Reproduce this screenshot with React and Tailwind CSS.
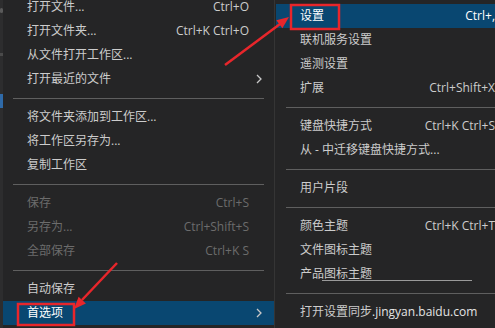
import React from "react";

const leftMenu = [
  { label: "打开文件...", shortcut: "Ctrl+O" },
  { label: "打开文件夹...", shortcut: "Ctrl+K Ctrl+O" },
  { label: "从文件打开工作区..." },
  { label: "打开最近的文件", submenu: true },
  { sep: true },
  { label: "将文件夹添加到工作区..." },
  { label: "将工作区另存为..." },
  { label: "复制工作区" },
  { sep: true },
  { label: "保存", shortcut: "Ctrl+S", disabled: true },
  { label: "另存为...", shortcut: "Ctrl+Shift+S", disabled: true },
  { label: "全部保存", shortcut: "Ctrl+K S", disabled: true },
  { sep: true },
  { label: "自动保存" },
  { label: "首选项", submenu: true, selected: true },
];

const rightMenu = [
  { label: "设置", shortcut: "Ctrl+,", selected: true },
  { label: "联机服务设置" },
  { label: "遥测设置" },
  { label: "扩展", shortcut: "Ctrl+Shift+X" },
  { sep: true },
  { label: "键盘快捷方式", shortcut: "Ctrl+K Ctrl+S" },
  { label: "从 - 中迁移键盘快捷方式..." },
  { sep: true },
  { label: "用户片段" },
  { sep: true },
  { label: "颜色主题", shortcut: "Ctrl+K Ctrl+T" },
  { label: "文件图标主题" },
  { label: "产品图标主题", underline: true },
  { sep: true },
  { label: "打开设置同步", watermark: true },
];

const Chevron = () => (
  <svg width="6" height="10" viewBox="0 0 6 10" fill="none">
    <polyline points="1,1 5,5 1,9" stroke="#c8c8c8" strokeWidth="1.3" />
  </svg>
);

const MenuRow = ({ item }) => {
  if (item.sep) {
    return (
      <div className="h-[14px] flex items-center px-[10px]">
        <div className="h-px w-full bg-[#5f5f5f]" />
      </div>
    );
  }
  const tone = item.selected
    ? "bg-[#094771] text-white"
    : item.disabled
    ? "text-[#6c6c6c]"
    : "text-[#cccccc]";
  return (
    <div className={`h-6 shrink-0 flex items-center pl-6 pr-[12px] relative ${tone}`}>
      <span className="flex-1 whitespace-nowrap">
        {item.label}
        {item.watermark && (
          <span className="text-[#e4e4e4]">.jingyan.baidu.com</span>
        )}
      </span>
      {item.shortcut && (
        <span className="whitespace-nowrap text-[12px]">{item.shortcut}</span>
      )}
      <span className="w-[13px] flex justify-end">{item.submenu && <Chevron />}</span>
      {item.underline && (
        <div className="absolute left-[46px] top-[18px] w-[150px] h-px bg-[#9a9a9a]" />
      )}
    </div>
  );
};

export default function App() {
  return (
    <div className="w-[495px] h-[328px] overflow-hidden relative flex bg-[#252526] text-[12px] font-['Open_Sans','Noto_Sans_CJK_SC',sans-serif]">
      <div className="w-[3px] shrink-0 bg-[#2d2d2e] flex flex-col items-center">
        <div className="mt-[8px] w-[3px] h-[5px] rounded-full bg-[#5a5a5a]" />
        <div className="mt-[40px] w-[3px] h-[3px] bg-[#4a4a4a]" />
        <div className="mt-[38px] w-[3px] h-[14px] bg-[#2f6aa8]" />
      </div>

      <div className="w-[272px] shrink-0 flex flex-col mt-[-5px] border-r border-[#353535]">
        {leftMenu.map((item, i) => (
          <MenuRow key={i} item={item} />
        ))}
      </div>

      <div className="w-[245px] shrink-0 flex flex-col pt-[4px] pl-[1px]">
        {rightMenu.map((item, i) => (
          <MenuRow key={i} item={item} />
        ))}
      </div>

      <svg
        className="absolute inset-0 pointer-events-none"
        width="495"
        height="328"
        viewBox="0 0 495 328"
      >
        <rect x="291" y="5" width="48" height="24" fill="none" stroke="#e8262b" strokeWidth="2.5" />
        <rect x="18" y="304" width="56" height="21" fill="none" stroke="#e8262b" strokeWidth="2.5" />
        <line x1="225" y1="65" x2="280" y2="24" stroke="#e8262b" strokeWidth="2.5" />
        <polygon points="289,17 282.4,28.2 276.4,20.2" fill="#e8262b" />
        <line x1="117" y1="263" x2="82" y2="300" stroke="#e8262b" strokeWidth="2.5" />
        <polygon points="74,309 85.9,303.6 78.6,296.8" fill="#e8262b" />
      </svg>
    </div>
  );
}
